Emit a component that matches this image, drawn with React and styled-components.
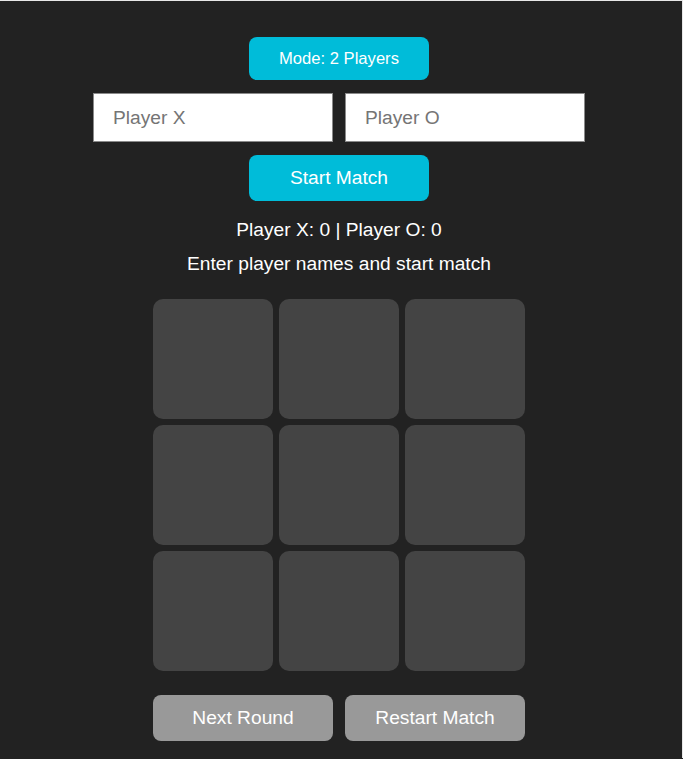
import React, { useState } from 'react'
import styled, { createGlobalStyle } from 'styled-components'

const GlobalStyle = createGlobalStyle`
  html, body {
    margin: 0;
    padding: 0;
    background: #222222;
  }

  body {
    font-family: "Liberation Sans", Arial, sans-serif;
    color: #ffffff;
    border-top: 1px solid #e8e8e8;
    border-right: 1px solid #e8e8e8;
    min-height: 758px;
    box-sizing: border-box;
  }
`

const Page = styled.div`
  display: flex;
  flex-direction: column;
  align-items: center;
  padding-top: 36px;
  padding-right: 4px;
  padding-bottom: 17px;
`

const Button = styled.button`
  width: 180px;
  height: ${(props) => props.height || 46}px;
  border: none;
  border-radius: 8px;
  background: ${(props) => (props.muted ? '#999999' : '#00bcd9')};
  color: #ffffff;
  font-family: inherit;
  font-size: ${(props) => props.fontSize || 19.2}px;
  cursor: pointer;
  padding: 0;
`

const InputRow = styled.div`
  display: flex;
  gap: 12px;
  margin: 13px 0;
`

const NameInput = styled.input`
  width: 240px;
  height: 49px;
  box-sizing: border-box;
  border: 1px solid #8a8a8a;
  background: #ffffff;
  padding: 0 19px;
  font-family: inherit;
  font-size: 19.2px;
  color: #333;
  outline: none;

  &::placeholder {
    color: #757575;
  }
`

const Score = styled.div`
  font-size: 19.2px;
  margin-top: 18px;
  line-height: 22px;
`

const Status = styled.div`
  font-size: 19.2px;
  margin-top: 12px;
  line-height: 22px;
`

const Board = styled.div`
  display: grid;
  grid-template-columns: repeat(3, 120px);
  grid-template-rows: repeat(3, 120px);
  gap: 6px;
  margin-top: 24px;
`

const Cell = styled.div`
  background: #444444;
  border-radius: 10px;
`

const Controls = styled.div`
  display: flex;
  gap: 12px;
  margin-top: 24px;
`

export default function App() {
  const [cells] = useState(Array(9).fill(null))

  return (
    <>
      <GlobalStyle />
      <Page>
        <Button height={43} fontSize={16.6}>Mode: 2 Players</Button>
        <InputRow>
          <NameInput placeholder="Player X" />
          <NameInput placeholder="Player O" />
        </InputRow>
        <Button>Start Match</Button>
        <Score>Player X: 0 | Player O: 0</Score>
        <Status>Enter player names and start match</Status>
        <Board>
          {cells.map((c, i) => (
            <Cell key={i}>{c}</Cell>
          ))}
        </Board>
        <Controls>
          <Button muted>Next Round</Button>
          <Button muted>Restart Match</Button>
        </Controls>
      </Page>
    </>
  )
}
